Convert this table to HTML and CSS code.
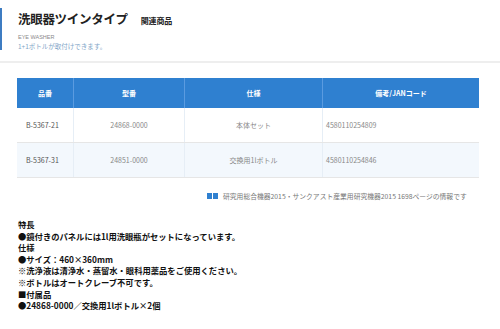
FILE: index.html
```html
<!DOCTYPE html>
<html lang="ja">
<head>
<meta charset="utf-8">
<link rel="stylesheet" href="styles.css">
</head>
<body>
<header class="head">
  <div class="title-row">
    <h1 class="title">洗眼器ツインタイプ</h1>
    <span class="related">関連商品</span>
  </div>
  <div class="en">EYE WASHER</div>
  <div class="sub">1+1ボトルが取付けできます。</div>
</header>
<div class="rule"></div>
<table class="spec">
  <thead>
    <tr><th class="c1">品番</th><th class="c2">型番</th><th class="c3">仕様</th><th class="c4">備考/JANコード</th></tr>
  </thead>
  <tbody>
    <tr><td class="l">B-5367-21</td><td>24868-0000</td><td>本体セット</td><td class="l">4580110254809</td></tr>
    <tr class="alt"><td class="l">B-5367-31</td><td>24851-0000</td><td>交換用1lボトル</td><td class="l">4580110254846</td></tr>
  </tbody>
</table>
<div class="note">
  <span class="note-icon"><i></i><i></i></span>
  <span>研究用総合機器2015・サンクアスト産業用研究機器2015 1698ページの情報です</span>
</div>
<div class="desc">
  <p>特長</p>
  <p>●鏡付きのパネルには1l用洗眼瓶がセットになっています。</p>
  <p>仕様</p>
  <p>●サイズ：460×360mm</p>
  <p>※洗浄液は清浄水・蒸留水・眼科用薬品をご使用ください。</p>
  <p>※ボトルはオートクレーブ不可です。</p>
  <p>■付属品</p>
  <p>●24868-0000／交換用1lボトル×2個</p>
</div>
</body>
</html>
```
FILE: styles.css
```css
html, body {
  margin: 0;
  padding: 0;
  background: #ffffff;
}
body {
  width: 500px;
  height: 329px;
  overflow: hidden;
  font-family: "Noto Sans CJK JP", "Noto Sans", sans-serif;
  color: #333;
}
.head {
  margin-top: 8px;
  height: 42px;
  border-left: 2px solid #3d7cc2;
  padding: 3px 0 0 16px;
  box-sizing: border-box;
}
.title-row {
  display: flex;
  align-items: baseline;
  height: 16px;
}
.title {
  margin: 0;
  font-size: 12.5px;
  line-height: 16px;
  font-weight: bold;
  color: #222;
  letter-spacing: -0.3px;
}
.related {
  margin-left: 13px;
  font-size: 8px;
  font-weight: bold;
  color: #222;
  letter-spacing: -0.2px;
}
.en {
  margin-top: 6px;
  font-family: "Liberation Sans", sans-serif;
  font-size: 5.5px;
  line-height: 8px;
  color: #8a8a8a;
}
.sub {
  font-size: 6.5px;
  line-height: 10px;
  color: #7fa6c8;
}
.rule {
  margin-top: 11px;
  height: 2px;
  background: #eeeeee;
}
.spec {
  margin: 15px 0 0 17px;
  width: 462px;
  border-collapse: collapse;
  font-size: 7px;
  color: #888;
  table-layout: fixed;
}
.spec th {
  background: #2f80d0;
  color: #ffffff;
  font-weight: bold;
  height: 30px;
  padding: 0;
  border-left: 1px solid #5a9be0;
  font-size: 7px;
}
.spec th:first-child { border-left: none; }
.spec .c1 { width: 56px; }
.spec .c2 { width: 110px; }
.spec .c3 { width: 137px; }
.spec td {
  height: 34px;
  padding: 0;
  text-align: center;
  border-left: 1px solid #e6eef6;
  border-bottom: 1px solid #e6e6e6;
}
.spec td:first-child { border-left: none; color: #555; }
.spec td.l { text-align: left; padding-left: 9px; }
.spec td:last-child.l { padding-left: 3px; }
.spec tr.alt td { background: #f3f8fd; }
.note {
  margin-top: 12px;
  display: flex;
  align-items: center;
  padding-left: 207px;
  height: 12px;
  font-size: 6.8px;
  color: #777;
  white-space: nowrap;
}
.note-icon {
  display: flex;
  gap: 1px;
  margin-right: 5px;
}
.note-icon i {
  width: 5px;
  height: 6px;
  background: #2f80d0;
}
.desc {
  margin-top: 17px;
  padding-left: 18px;
  font-size: 8.3px;
  line-height: 11.6px;
  font-weight: bold;
  color: #111;
}
.desc p {
  margin: 0;
  white-space: nowrap;
}
```
